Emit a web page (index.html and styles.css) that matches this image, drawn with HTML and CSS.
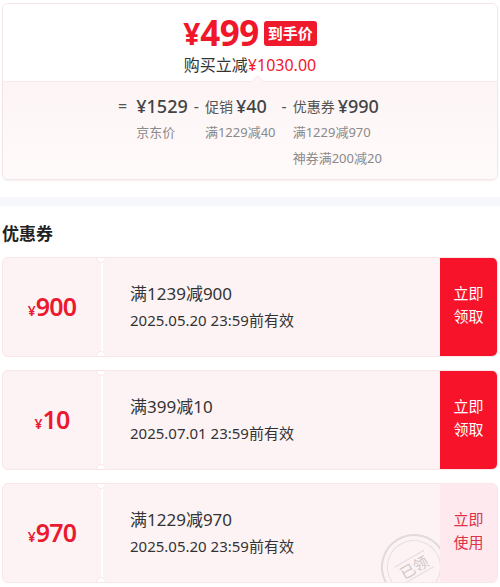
FILE: index.html
```html
<!DOCTYPE html>
<html lang="zh">
<head>
<meta charset="utf-8">
<link rel="stylesheet" href="styles.css">
</head>
<body>
<div class="price-card">
  <div class="price-top">
    <div class="final">
      <span class="yen">¥</span><span class="num">499</span><span class="badge">到手价</span>
    </div>
    <div class="save">购买立减<span class="red">¥1030.00</span></div>
  </div>
  <div class="price-bottom">
    <div class="formula">
      <div class="group">
        <span class="op">=</span>
        <div class="col">
          <div class="main"><span class="val">¥1529</span></div>
          <div class="sub">京东价</div>
        </div>
      </div>
      <div class="group">
        <span class="op">-</span>
        <div class="col">
          <div class="main"><span class="lbl">促销</span><span class="val">¥40</span></div>
          <div class="sub">满1229减40</div>
        </div>
      </div>
      <div class="group">
        <span class="op">-</span>
        <div class="col">
          <div class="main"><span class="lbl">优惠券</span><span class="val">¥990</span></div>
          <div class="sub">满1229减970</div>
          <div class="sub">神券满200减20</div>
        </div>
      </div>
    </div>
  </div>
</div>
<div class="band"></div>
<h2 class="title">优惠券</h2>
<div class="coupons">
  <div class="coupon">
    <div class="stub"><span class="cy">¥</span><span class="camt">900</span></div>
    <div class="body">
      <div class="cond">满1239减900</div>
      <div class="date">2025.05.20 23:59前有效</div>
    </div>
    <div class="btn">立即<br>领取</div>
  </div>
  <div class="coupon">
    <div class="stub"><span class="cy">¥</span><span class="camt">10</span></div>
    <div class="body">
      <div class="cond">满399减10</div>
      <div class="date">2025.07.01 23:59前有效</div>
    </div>
    <div class="btn">立即<br>领取</div>
  </div>
  <div class="coupon">
    <div class="stub"><span class="cy">¥</span><span class="camt">970</span></div>
    <div class="body">
      <div class="cond">满1229减970</div>
      <div class="date">2025.05.20 23:59前有效</div>
      <div class="stamp"><div class="stamp-in"><span>已领</span></div></div>
    </div>
    <div class="btn used">立即<br>使用</div>
  </div>
</div>
</body>
</html>
```
FILE: styles.css
```css
* { box-sizing: border-box; }
body {
  margin: 0;
  background: #fff;
  font-family: "Noto Sans", "Noto Sans CJK SC", sans-serif;
  color: #333;
  width: 500px;
  height: 587px;
  overflow: hidden;
}
.price-card {
  margin: 3px 2px 0 2px;
  border: 1px solid #f6e4e7;
  border-radius: 6px;
  box-shadow: 0 1px 2px rgba(0,0,0,0.06);
  overflow: hidden;
  height: 177px;
}
.price-top {
  height: 78px;
  background: #fff;
  display: flex;
  flex-direction: column;
  align-items: center;
  padding-top: 10px;
  position: relative;
  border-bottom: 1px solid #f9eaec;
}
.price-top::after {
  content: "";
  position: absolute;
  left: 250px;
  bottom: -1px;
  width: 8px;
  height: 8px;
  background: #fdf6f6;
  border-left: 1px solid #f9eaec;
  border-top: 1px solid #f9eaec;
  transform: translateY(4px) rotate(45deg);
}
.final {
  display: flex;
  align-items: center;
  height: 37px;
  color: #f0172b;
}
.yen {
  font-size: 30px;
  font-weight: 700;
  line-height: 1;
  margin-top: 3px;
}
.num {
  font-size: 35px;
  font-weight: 700;
  line-height: 1;
  letter-spacing: -0.5px;
}
.badge {
  margin-left: 5px;
  background: #ef1a2c;
  color: #fff;
  font-size: 15px;
  font-weight: 700;
  height: 25px;
  line-height: 25px;
  padding: 0 4px;
  border-radius: 3px;
  margin-top: 2px;
}
.save {
  font-size: 16px;
  line-height: 22px;
  color: #333;
  margin-top: 3px;
}
.red { color: #f0172b; }
.price-bottom {
  height: 98px;
  background: linear-gradient(#fdf5f5, #fffafa);
  display: flex;
  justify-content: center;
  padding-top: 11px;
  padding-left: 0;
}
.formula {
  display: flex;
  align-items: flex-start;
  gap: 6px;
}
.group {
  display: flex;
  align-items: flex-start;
}
.op {
  font-size: 16px;
  line-height: 26px;
  color: #555;
  margin-right: 6px;
}
.group:first-child .op { margin-right: 9px; }
.col { display: flex; flex-direction: column; }
.main {
  display: flex;
  align-items: center;
  height: 26px;
  gap: 3px;
}
.lbl { font-size: 14px; color: #555; }
.val { font-size: 18px; font-weight: 500; color: #444; }
.sub {
  font-size: 13px;
  color: #8a8a8a;
  line-height: 26px;
}
.band {
  margin-top: 17px;
  height: 9px;
  background: #f6f7fb;
}
.title {
  margin: 16px 0 0 2px;
  font-size: 17px;
  font-weight: 700;
  line-height: 24px;
  color: #222;
}
.coupons {
  margin-top: 11px;
  display: flex;
  flex-direction: column;
  gap: 13px;
  padding: 0 2px;
}
.coupon {
  display: flex;
  height: 100px;
  background: #fdf3f4;
  border: 1px solid #f8e6e9;
  border-radius: 6px;
  overflow: hidden;
  position: relative;
}
.stub {
  width: 100px;
  display: flex;
  align-items: baseline;
  justify-content: center;
  padding-top: 31px;
  color: #ea1a30;
  border-right: 2px solid #fff;
  position: relative;
}
.stub::before, .stub::after {
  content: "";
  position: absolute;
  right: -5px;
  width: 8px;
  height: 8px;
  border-radius: 50%;
  background: #fff;
  border: 1px solid #f8e6e9;
}
.stub::before { top: -5px; }
.stub::after { bottom: -5px; }
.cy { font-size: 14px; font-weight: 600; }
.camt { font-size: 25px; font-weight: 600; letter-spacing: -0.8px; }
.body {
  flex: 1;
  padding-left: 27px;
  padding-top: 22px;
  position: relative;
  overflow: hidden;
}
.cond { font-size: 17px; line-height: 27px; color: #333; }
.date { font-size: 15px; line-height: 27px; color: #333; }
.btn {
  width: 57px;
  background: #f7142a;
  color: #fff;
  font-size: 15px;
  line-height: 23px;
  display: flex;
  align-items: center;
  justify-content: center;
  text-align: center;
  padding-bottom: 4px;
}
.btn.used {
  background: #fde9ee;
  color: #e0314b;
}
.stamp {
  position: absolute;
  left: 278px;
  top: 50px;
  width: 66px;
  height: 66px;
  border-radius: 50%;
  border: 2px solid #e0dadb;
  display: flex;
  align-items: center;
  justify-content: center;
  transform: rotate(-30deg);
}
.stamp-in {
  width: 54px;
  height: 54px;
  border-radius: 50%;
  border: 1px solid #e6e0e1;
  display: flex;
  align-items: center;
  justify-content: center;
}
.stamp-in span {
  font-size: 15px;
  color: #cdc7c8;
  border-top: 1px solid #e2dcdd;
  border-bottom: 1px solid #e2dcdd;
  line-height: 18px;
  padding: 0 2px;
}
```
